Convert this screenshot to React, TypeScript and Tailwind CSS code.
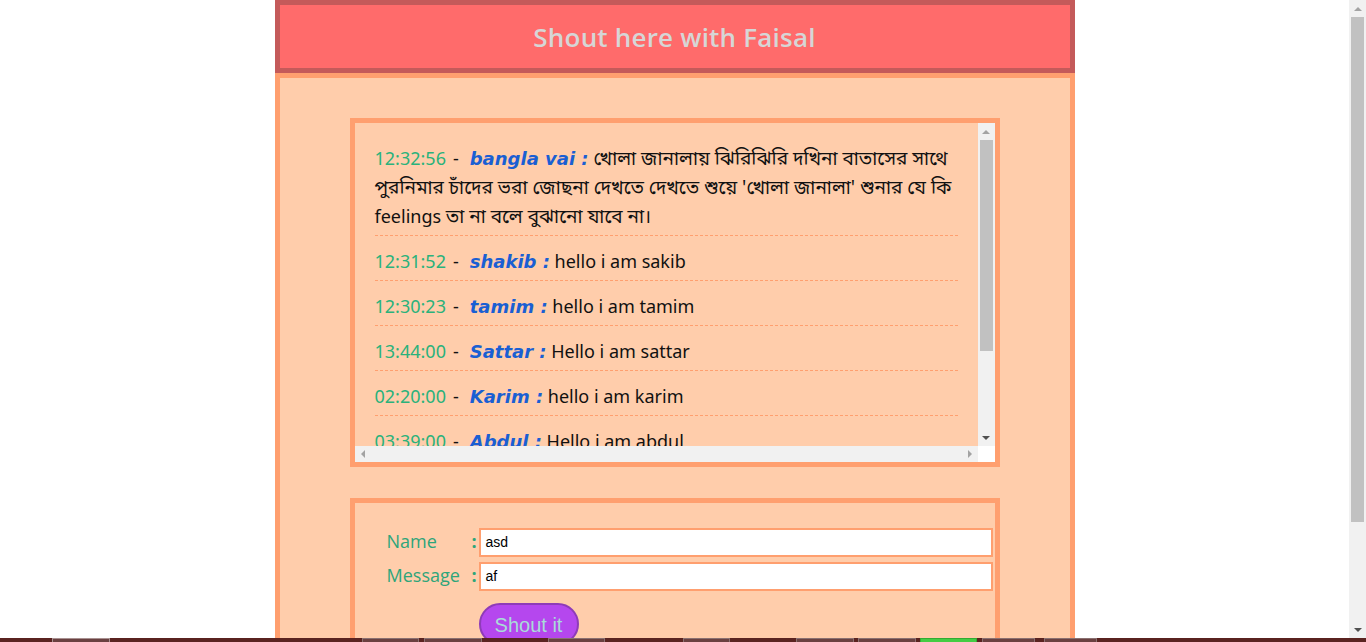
import React from "react";

const bn = '"Noto Sans", "Noto Sans Bengali", "Noto Serif Bengali", "Lohit Bengali", "FreeSans", sans-serif';

type Part = { t: string; b?: boolean };
type Msg = { time: string; name: string; lines: Part[][] };

const msgs: Msg[] = [
  {
    time: "12:32:56",
    name: "bangla vai :",
    lines: [
      [{ t: " খোলা জানালায় ঝিরিঝিরি দখিনা বাতাসের সাথে", b: true }],
      [{ t: "পুরনিমার চাঁদের ভরা জোছনা দেখতে দেখতে শুয়ে 'খোলা জানালা' শুনার যে কি", b: true }],
      [{ t: "feelings " }, { t: "তা না বলে বুঝানো যাবে না।", b: true }],
    ],
  },
  { time: "12:31:52", name: "shakib :", lines: [[{ t: " hello i am sakib" }]] },
  { time: "12:30:23", name: "tamim :", lines: [[{ t: " hello i am tamim" }]] },
  { time: "13:44:00", name: "Sattar :", lines: [[{ t: " Hello i am sattar" }]] },
  { time: "02:20:00", name: "Karim :", lines: [[{ t: " hello i am karim" }]] },
  { time: "03:39:00", name: "Abdul :", lines: [[{ t: " Hello i am abdul" }]] },
];

function Tri({ dir, color }: { dir: "up" | "down" | "left" | "right"; color: string }) {
  const pts =
    dir === "up"
      ? "0,4 4,0 8,4"
      : dir === "down"
      ? "0,0 8,0 4,4"
      : dir === "left"
      ? "4,0 4,8 0,4"
      : "0,0 0,8 4,4";
  const w = dir === "up" || dir === "down" ? 8 : 4;
  const h = dir === "up" || dir === "down" ? 4 : 8;
  return (
    <svg width={w} height={h} viewBox={`0 0 ${w} ${h}`}>
      <polygon points={pts} fill={color} />
    </svg>
  );
}

export default function App() {
  return (
    <div className="w-[1366px] h-[642px] flex flex-col overflow-hidden bg-white">
      <div className="flex h-[638px] overflow-hidden">
        <div className="flex-1 flex justify-center overflow-hidden">
          <div className="w-[800px] flex flex-col shrink-0">
            <div className="h-[73px] border-[5px] border-[#c45a5a] bg-[#ff6b6b] flex items-center justify-center shrink-0">
              <span
                className="text-[26px] font-semibold text-[#d6d6d6] tracking-[0.2px] pt-[2px]"
                style={{ fontFamily: '"Open Sans", "Noto Sans", sans-serif' }}
              >
                Shout here with Faisal
              </span>
            </div>
            <div className="flex-1 border-[5px] border-b-0 border-[#ff9f6f] bg-[#ffcdab] px-[70px] pt-[40px]">
              {/* chat box */}
              <div className="h-[349px] border-[5px] border-[#ff9f6f] flex flex-col">
                <div className="flex flex-1 min-h-0">
                  <div
                    className="flex-1 overflow-hidden px-5 pt-[10px]"
                    style={{ fontFamily: bn }}
                  >
                    {msgs.map((m, i) => (
                      <div
                        key={i}
                        className="pt-[11px] pb-[4px] border-b border-dashed border-[#ff9f6f] text-[18px] leading-[29px] text-[#111]"
                      >
                        {m.lines.map((l, j) => (
                          <div key={j} className="whitespace-pre h-[29px]">
                            {j === 0 && (
                              <>
                                <span className="text-[#2ab27b]">{m.time}</span>
                                <span className="ml-[7px] mr-[11px]">-</span>
                                <span
                                  className="font-bold italic text-[#1a5fd3]"
                                  style={{ fontFamily: '"DejaVu Sans", Verdana, sans-serif' }}
                                >
                                  {m.name}
                                </span>
                              </>
                            )}
                            {l.map((p, k) =>
                              p.b ? (
                                <span key={k} className="text-[19px]">
                                  {p.t}
                                </span>
                              ) : (
                                <span key={k}>{p.t}</span>
                              )
                            )}
                          </div>
                        ))}
                      </div>
                    ))}
                  </div>
                  {/* vertical scrollbar */}
                  <div className="w-[17px] bg-[#f1f1f1] flex flex-col items-center shrink-0">
                    <div className="h-[17px] flex items-center justify-center">
                      <Tri dir="up" color="#a3a3a3" />
                    </div>
                    <div className="w-[13px] h-[211px] bg-[#c1c1c1]" />
                    <div className="flex-1" />
                    <div className="h-[17px] flex items-center justify-center">
                      <Tri dir="down" color="#505050" />
                    </div>
                  </div>
                </div>
                {/* horizontal scrollbar */}
                <div className="h-[16px] flex shrink-0">
                  <div className="flex-1 bg-[#f1f1f1] flex items-center justify-between px-[6px]">
                    <Tri dir="left" color="#a3a3a3" />
                    <Tri dir="right" color="#a3a3a3" />
                  </div>
                  <div className="w-[17px] bg-white" />
                </div>
              </div>

              {/* form box */}
              <div className="mt-[31px] h-[200px] border-[5px] border-[#ff9f6f] pt-[25px] pr-[2px]">
                <div
                  className="flex flex-col gap-[5px]"
                  style={{ fontFamily: '"Open Sans", "Noto Sans", sans-serif' }}
                >
                  <div className="flex items-center h-[29px]">
                    <span className="w-[117px] pl-[32px] text-[18px] text-[#2ea57a] pb-[2px]">Name</span>
                    <span className="w-[7px] text-[18px] text-[#2ea57a] font-bold pb-[2px]">:</span>
                    <div
                      className="flex-1 h-[29px] border-2 border-[#ff9f6f] bg-white flex items-center px-[5px] text-[14px] text-black"
                      style={{ fontFamily: '"Liberation Sans", Arial, sans-serif' }}
                    >
                      asd
                    </div>
                  </div>
                  <div className="flex items-center h-[29px]">
                    <span className="w-[117px] pl-[32px] text-[18px] text-[#2ea57a] pb-[2px]">Message</span>
                    <span className="w-[7px] text-[18px] text-[#2ea57a] font-bold pb-[2px]">:</span>
                    <div
                      className="flex-1 h-[29px] border-2 border-[#ff9f6f] bg-white flex items-center px-[5px] text-[14px] text-black"
                      style={{ fontFamily: '"Liberation Sans", Arial, sans-serif' }}
                    >
                      af
                    </div>
                  </div>
                </div>
                <div className="pl-[124px] mt-[12px]">
                  <button
                    className="w-[100px] h-[42px] rounded-full border-2 border-[#8e3cb8] bg-[#b547ee] text-[#a9dcd8] text-[20px] pt-[2px]"
                    style={{ fontFamily: '"Liberation Sans", Arial, sans-serif' }}
                  >
                    Shout it
                  </button>
                </div>
              </div>
            </div>
          </div>
        </div>
        {/* page scrollbar */}
        <div className="w-[17px] bg-[#f1f1f1] flex flex-col items-center shrink-0">
          <div className="h-[17px] flex items-center justify-center">
            <Tri dir="up" color="#a3a3a3" />
          </div>
          <div className="w-[13px] h-[505px] bg-[#c1c1c1]" />
          <div className="flex-1" />
          <div className="h-[17px] flex items-center justify-center">
            <Tri dir="down" color="#505050" />
          </div>
        </div>
      </div>
      {/* bottom strip */}
      <div className="h-[4px] bg-[#5a2320] flex items-stretch">
        <div className="w-[52px]" />
        <div className="w-[58px] border-t border-x border-[#a89090] bg-[#6a4040]" />
        <div className="w-[252px]" />
        <div className="w-[57px] border-t border-x border-[#8a7070] bg-[#6a4040]" />
        <div className="w-[5px]" />
        <div className="w-[58px] border-t border-x border-[#8a7070] bg-[#6a4040]" />
        <div className="w-[66px]" />
        <div className="w-[57px] border-t border-x border-[#8a7070] bg-[#6a4040]" />
        <div className="w-[78px]" />
        <div className="w-[47px] border-t border-x border-[#8a7070] bg-[#6a4040]" />
        <div className="w-[66px]" />
        <div className="w-[58px] border-t border-x border-[#8a7070] bg-[#6a4040]" />
        <div className="w-[4px]" />
        <div className="w-[58px] border-t border-x border-[#8a7070] bg-[#6a4040]" />
        <div className="w-[4px]" />
        <div className="w-[57px] border-t border-x border-[#3a3] bg-[#4c4]" />
        <div className="w-[5px]" />
        <div className="w-[53px] border-t border-x border-[#8a7070] bg-[#6a4040]" />
        <div className="w-[9px]" />
        <div className="w-[53px] border-t border-x border-[#8a7070] bg-[#6a4040]" />
      </div>
    </div>
  );
}
